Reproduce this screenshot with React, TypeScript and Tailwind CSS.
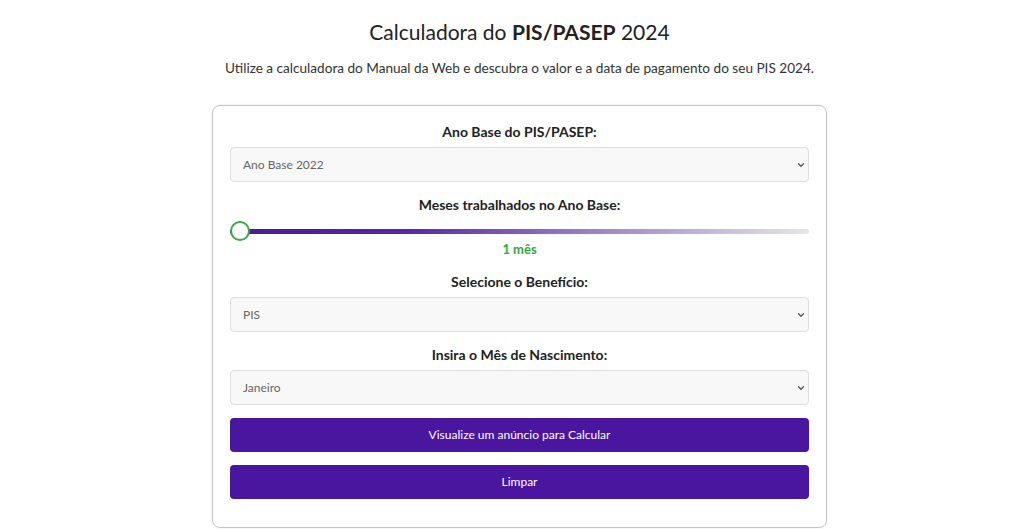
import { ChevronDown } from "lucide-react";

const Field = ({ label, value }: { label: string; value: string }) => {
  return (
    <div className="flex flex-col">
      <label className="text-center text-[14px] font-bold text-[#222] leading-5 mb-[5px]">{label}</label>
      <div className="relative">
        <select
          defaultValue={value}
          className="w-full h-[35px] appearance-none rounded-[4px] border border-[#dedede] bg-[#f8f8f8] pl-3 pr-8 text-[12px] text-[#666] outline-none"
        >
          <option>{value}</option>
        </select>
        <ChevronDown className="pointer-events-none absolute right-[3px] top-1/2 -translate-y-1/2 w-[10px] h-[10px] text-[#555]" strokeWidth={3} />
      </div>
    </div>
  );
};

const App = () => {
  return (
    <div className="min-h-screen bg-white font-['Lato','Open_Sans',sans-serif] text-[#222] flex justify-center pl-[15px]">
      <div className="w-[615px] pt-[18px]">
        <h1 className="text-center text-[21px] leading-7 text-[#222]">
          Calculadora do <span className="font-bold">PIS/PASEP</span> 2024
        </h1>
        <p className="mt-[12px] text-center text-[13.6px] leading-5 text-[#333] whitespace-nowrap -mx-10">
          Utilize a calculadora do Manual da Web e descubra o valor e a data de pagamento do seu PIS 2024.
        </p>

        <div className="mt-[27px] rounded-[8px] border border-[#c4c4c4] px-[17px] pt-[16px] pb-[28px] shadow-[0_0_3px_rgba(0,0,0,0.08)]">
          <Field label="Ano Base do PIS/PASEP:" value="Ano Base 2022" />

          <div className="mt-[13px] flex flex-col">
            <label className="text-center text-[14px] font-bold text-[#222] leading-5">Meses trabalhados no Ano Base:</label>
            <div className="relative mt-[8px] h-[16px] flex items-center">
              <div className="h-[5px] w-full rounded-full bg-[linear-gradient(to_right,#4a1a9c_0%,#5526a6_30%,#9a80c8_62%,#e6e6e6_100%)]" />
              <div className="absolute left-0 top-1/2 -translate-y-1/2 w-[20px] h-[20px] rounded-full border-2 border-[#3aa64a] bg-white" />
            </div>
            <span className="text-center text-[13px] font-bold text-[#2fa83e] leading-5">1 mês</span>
          </div>

          <div className="mt-[13px]">
            <Field label="Selecione o Benefício:" value="PIS" />
          </div>
          <div className="mt-[13px]">
            <Field label="Insira o Mês de Nascimento:" value="Janeiro" />
          </div>

          <button className="mt-[13px] w-full h-[34px] rounded-[4px] bg-[#4a16a0] text-[12px] text-white">
            Visualize um anúncio para Calcular
          </button>
          <button className="mt-[13px] w-full h-[34px] rounded-[4px] bg-[#4a16a0] text-[12px] text-white">
            Limpar
          </button>
        </div>
      </div>
    </div>
  );
};

export default App;
